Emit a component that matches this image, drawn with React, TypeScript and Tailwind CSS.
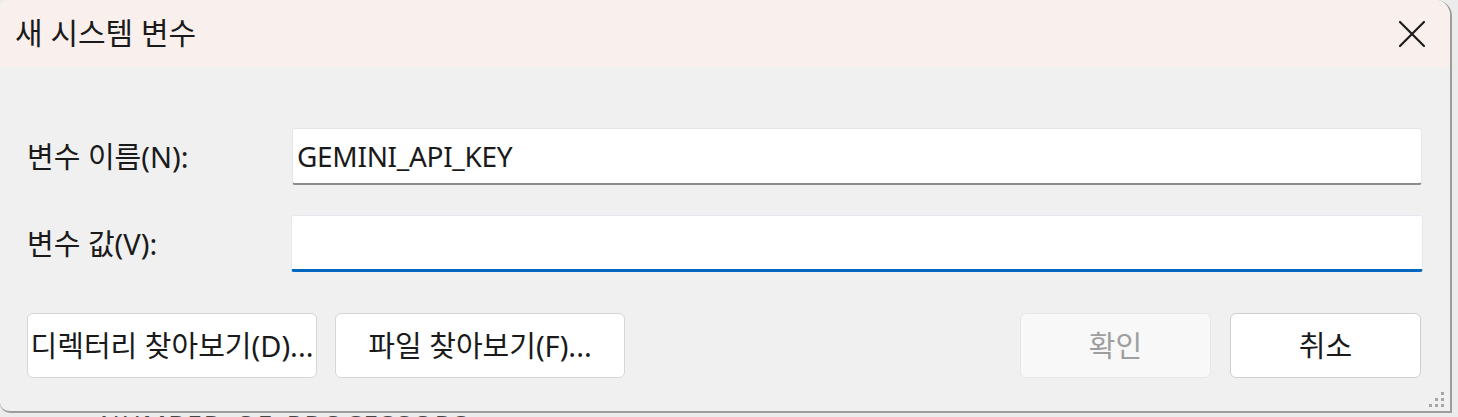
import React from 'react';

const font = "font-['Noto_Sans','Noto_Sans_CJK_KR',sans-serif]";

const CloseIcon = () => (
  <svg width="28" height="28" viewBox="0 0 28 28" fill="none" stroke="#1b1b1b" strokeWidth={2.2} strokeLinecap="round">
    <path d="M2 2l24 24M26 2L2 26" />
  </svg>
);

const Grip = () => (
  <div className="absolute right-[6px] bottom-[4px] grid grid-cols-3 gap-[3px]">
    {[0, 0, 1, 0, 1, 1, 1, 1, 1].map((on, i) => (
      <div key={i} className={on ? 'w-[3px] h-[3px] bg-[#a6a6a6]' : 'w-[3px] h-[3px]'} />
    ))}
  </div>
);

export default function App() {
  return (
    <div className={`w-[1458px] h-[417px] bg-[#ececec] overflow-hidden ${font} text-[#1a1a1a]`}>
      <div className="relative w-[1452px] h-[413px] bg-[#f0f0f0] border-r-2 border-b-2 border-[#9d9d9d] rounded-tr-[16px] rounded-bl-[10px] rounded-tl-[8px] overflow-hidden flex flex-col">
        <div className="h-[67px] bg-[#f9f0ee] flex items-center justify-between pl-[15px] pr-[24px]">
          <span className="text-[30px] leading-none -mt-[2px]">새 시스템 변수</span>
          <CloseIcon />
        </div>

        <div className="pt-[61px] pl-[27px] pr-[26px] flex flex-col">
          <div className="flex items-center">
            <label className="w-[265px] text-[29px] leading-none">변수 이름(N):</label>
            <div className="w-[1130px] h-[57px] bg-white border border-[#e6e6e6] border-b-2 border-b-[#8b8b8b] rounded-[3px] flex items-center pl-[4px]">
              <span className="text-[28px] leading-none tracking-[-0.3px]">GEMINI_API_KEY</span>
            </div>
          </div>

          <div className="flex items-center mt-[30px]">
            <label className="w-[264px] text-[29px] leading-none">변수 값(V):</label>
            <div className="w-[1132px] h-[57px] bg-white border border-[#e4e9ef] border-b-[3px] border-b-[#0067c0] rounded-[3px]" />
          </div>
        </div>

        <div className="mt-[41px] pl-[27px] pr-[29px] flex items-center">
          <button className="w-[290px] h-[65px] bg-white border border-[#d6d6d6] rounded-[6px] text-[29px] whitespace-nowrap flex items-center justify-center">
            디렉터리 찾아보기(D)...
          </button>
          <button className="ml-[18px] w-[290px] h-[65px] bg-white border border-[#d6d6d6] rounded-[6px] text-[29px] whitespace-nowrap flex items-center justify-center">
            파일 찾아보기(F)...
          </button>
          <div className="flex-1" />
          <button className="w-[191px] h-[65px] bg-[#f8f8f8] border border-[#e6e6e6] rounded-[6px] text-[29px] text-[#9e9e9e] flex items-center justify-center">
            확인
          </button>
          <button className="ml-[19px] w-[191px] h-[65px] bg-white border border-[#cfcfcf] rounded-[6px] text-[29px] flex items-center justify-center">
            취소
          </button>
        </div>

        <Grip />
      </div>
      <div className="h-[4px] overflow-hidden pl-[100px]">
        <div className="-mt-[2px] text-[26px] leading-none text-[#444] tracking-[2px]">NUMBER_OF_PROCESSORS</div>
      </div>
    </div>
  );
}
